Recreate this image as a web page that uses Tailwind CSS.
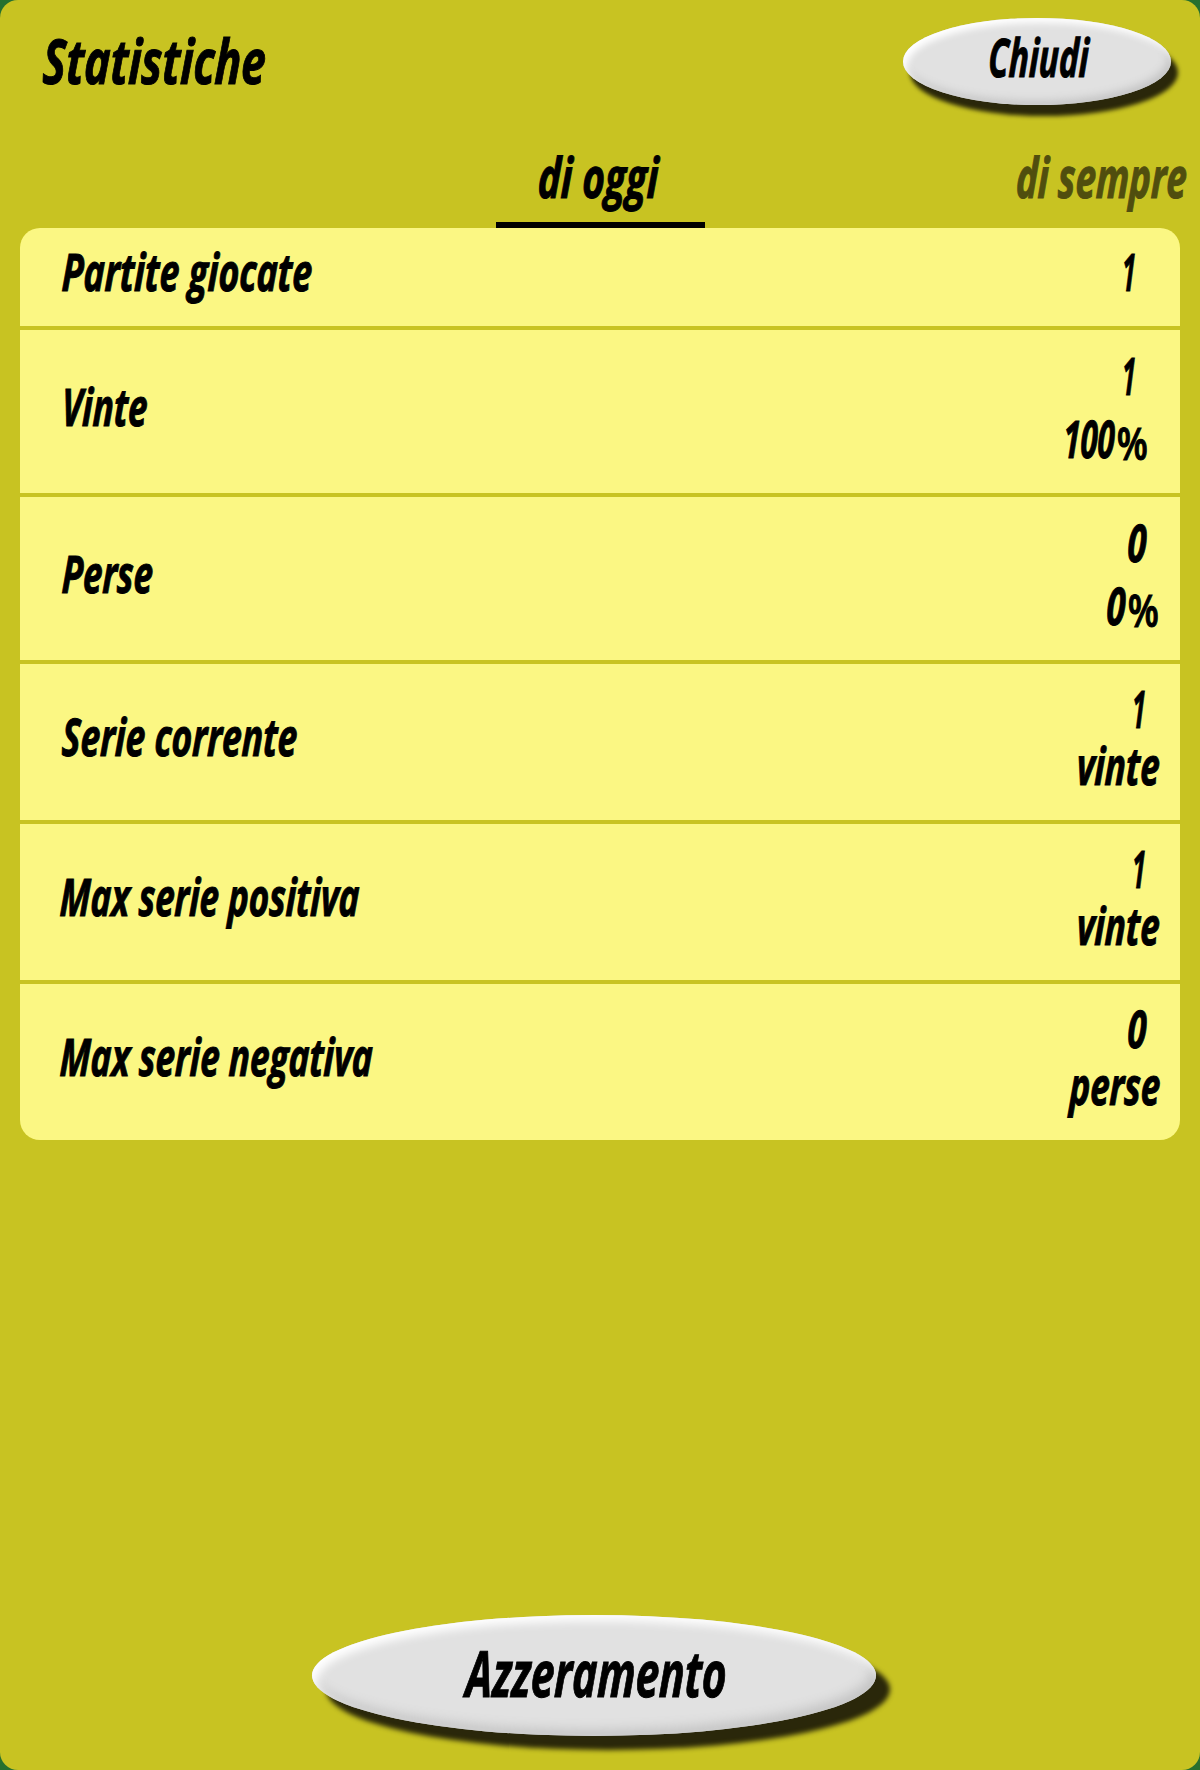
<!DOCTYPE html>
<html lang="it">

<head>
  <meta charset="UTF-8">
  <meta name="viewport" content="width=device-width, initial-scale=1">
  <title>Statistiche</title>
  <script src="https://cdn.jsdelivr.net/npm/@tailwindcss/browser@4"></script>
</head>

<body class="bg-[#26702f]">
  <div class="w-[1200px] h-[1770px] rounded-[18px] bg-[#c8c322] flex flex-col overflow-hidden whitespace-nowrap text-black font-bold italic font-['Open_Sans','Noto_Sans',sans-serif] [-webkit-text-stroke:1px_currentColor]">

    <!-- Title bar -->
    <header class="h-[132px] pt-[18px] pl-[43px] pr-[29px] flex justify-between items-start">
      <h1 class="text-[62px] leading-[84px] origin-left scale-x-[0.71] -skew-x-3">Statistiche</h1>
      <button class="w-[268px] h-[87px] rounded-[50%] bg-[#e1e1e1] pb-[11px] pl-[4px] flex items-center justify-center text-[53px] leading-none shadow-[7px_11px_4px_0px_#2a270a,inset_4px_5px_7px_#ffffff,inset_-3px_-4px_8px_#c4c4c4]">
        <span class="scale-x-[0.63] -skew-x-3">Chiudi</span>
      </button>
    </header>

    <!-- Tabs -->
    <nav class="h-24 grid grid-cols-[496px_209px_1fr] text-[56px] leading-[88px]">
      <div></div>
      <div class="border-b-[6px] border-black pr-[4px] flex justify-center"><span class="scale-x-[0.69] -skew-x-3">di oggi</span></div>
      <div class="pr-[13px] flex justify-end text-[#504e0e]"><span class="origin-right scale-x-[0.655] -skew-x-3">di sempre</span></div>
    </nav>

    <!-- Statistics -->
    <main class="mx-5 rounded-[20px] overflow-hidden flex flex-col gap-1 text-[52px]">
      <div class="h-[98px] bg-[#fbf783] pl-[42px] pr-[44px] pb-[12px] flex items-center justify-between">
        <span class="origin-left scale-x-[0.685] -skew-x-3">Partite giocate</span>
        <span class="origin-right scale-x-[0.48] -skew-x-3">1</span>
      </div>
      <div class="h-[163px] bg-[#fbf783] pl-[42px] pb-[12px] flex items-center justify-between">
        <span class="origin-left scale-x-[0.67] -skew-x-3">Vinte</span>
        <div class="flex flex-col items-end leading-[63px]">
          <span class="mr-[44px] origin-right scale-x-[0.48] -skew-x-3">1</span>
          <div class="h-[63px] mr-[32px] flex items-baseline">
            <span class="origin-right scale-x-[0.6] -skew-x-3">100</span>
            <span class="-ml-[6px] origin-right translate-y-[2px] scale-x-[0.8] text-[45px] not-italic font-semibold">%</span>
          </div>
        </div>
      </div>
      <div class="h-[163px] bg-[#fbf783] pl-[42px] pb-[12px] flex items-center justify-between">
        <span class="origin-left scale-x-[0.67] -skew-x-3">Perse</span>
        <div class="flex flex-col items-end leading-[63px]">
          <span class="mr-[33px] origin-right scale-x-[0.66] -skew-x-3">0</span>
          <div class="h-[63px] mr-[21px] flex items-baseline">
            <span class="origin-right scale-x-[0.66] -skew-x-3">0</span>
            <span class="-ml-[6px] origin-right translate-y-[2px] scale-x-[0.8] text-[45px] not-italic font-semibold">%</span>
          </div>
        </div>
      </div>
      <div class="h-[156px] bg-[#fbf783] pl-[42px] pb-[12px] flex items-center justify-between">
        <span class="origin-left scale-x-[0.68] -skew-x-3">Serie corrente</span>
        <div class="flex flex-col items-end leading-[57px]">
          <span class="mr-[34px] origin-right scale-x-[0.48] -skew-x-3">1</span>
          <span class="mr-[20px] origin-right scale-x-[0.67] -skew-x-3">vinte</span>
        </div>
      </div>
      <div class="h-[156px] bg-[#fbf783] pl-[40px] pb-[12px] flex items-center justify-between">
        <span class="origin-left scale-x-[0.67] -skew-x-3">Max serie positiva</span>
        <div class="flex flex-col items-end leading-[57px]">
          <span class="mr-[34px] origin-right scale-x-[0.48] -skew-x-3">1</span>
          <span class="mr-[20px] origin-right scale-x-[0.67] -skew-x-3">vinte</span>
        </div>
      </div>
      <div class="h-[156px] bg-[#fbf783] pl-[40px] pb-[12px] flex items-center justify-between">
        <span class="origin-left scale-x-[0.673] -skew-x-3">Max serie negativa</span>
        <div class="flex flex-col items-end leading-[57px]">
          <span class="mr-[33px] origin-right scale-x-[0.66] -skew-x-3">0</span>
          <span class="mr-[20px] origin-right scale-x-[0.67] -skew-x-3">perse</span>
        </div>
      </div>
    </main>

    <!-- Reset -->
    <footer class="mt-auto pb-[34px] pl-[312px]">
      <button class="w-[564px] h-[121px] rounded-[50%] bg-[#e1e1e1] pb-[6px] pl-[4px] flex items-center justify-center text-[64px] leading-none shadow-[14px_14px_5px_0px_#2a270a,inset_5px_6px_10px_#ffffff,inset_-4px_-6px_12px_#c4c4c4]">
        <span class="scale-x-[0.66] -skew-x-3">Azzeramento</span>
      </button>
    </footer>
  </div>
</body>

</html>
